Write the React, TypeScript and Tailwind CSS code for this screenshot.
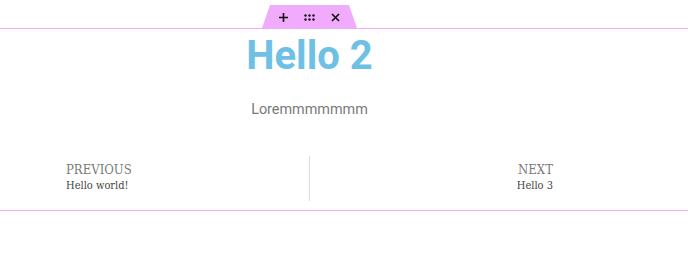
export default function App() {
    return (
        <div className="w-full h-[259px] bg-white" style={{ fontFamily: 'Roboto, sans-serif' }}>
            {/* Handle */}
            <div className="h-[28px] w-[619px] flex justify-center items-end">
                <div className="w-[95px] h-[23px] bg-[#f0abfc] rounded-t-[3px] [clip-path:polygon(8px_0,87px_0,95px_100%,0_100%)] flex items-center justify-center gap-[16px] pt-[1px]">
                    <svg width="9" height="9" viewBox="0 0 9 9">
                        <path d="M4.5 0v9M0 4.5h9" stroke="#111" strokeWidth="1.6" />
                    </svg>
                    <svg width="11" height="7" viewBox="0 0 11 7">
                        {[1.5, 5.5, 9.5].map(x => [1.5, 5.5].map(y => (
                            <circle key={`${x}-${y}`} cx={x} cy={y} r="1.2" fill="#111" />
                        )))}
                    </svg>
                    <svg width="9" height="9" viewBox="0 0 9 9">
                        <path d="M1 1l7 7M8 1l-7 7" stroke="#111" strokeWidth="1.6" />
                    </svg>
                </div>
            </div>

            {/* Section */}
            <section className="border-y border-[#f0abfc]">
                <div className="w-[619px] flex flex-col items-center">
                    <h2 className="text-[40px] font-bold leading-[1] text-[#6ec1e4] mt-[7px]">Hello 2</h2>
                    <p className="text-[14.4px] text-[#7a7a7a] mt-[22px] leading-[24px]">Loremmmmmmm</p>

                    {/* Post navigation */}
                    <div className="w-full flex items-stretch mt-[34px] mb-[9px] font-stretch-condensed" style={{ fontFamily: '"DejaVu Serif", serif' }}>
                        <div className="flex-1 pl-[66px] pt-[6px]">
                            <div className="text-[13px] text-[#7a7a7a] leading-[16px]">PREVIOUS</div>
                            <div className="text-[11px] text-[#444] leading-[16px]">Hello world!</div>
                        </div>
                        <div className="w-px h-[45px] bg-[#ddd]" />
                        <div className="flex-1 pr-[66px] pt-[6px] text-right">
                            <div className="text-[13px] text-[#7a7a7a] leading-[16px]">NEXT</div>
                            <div className="text-[11px] text-[#444] leading-[16px]">Hello 3</div>
                        </div>
                    </div>
                </div>
            </section>
        </div>
    )
}
